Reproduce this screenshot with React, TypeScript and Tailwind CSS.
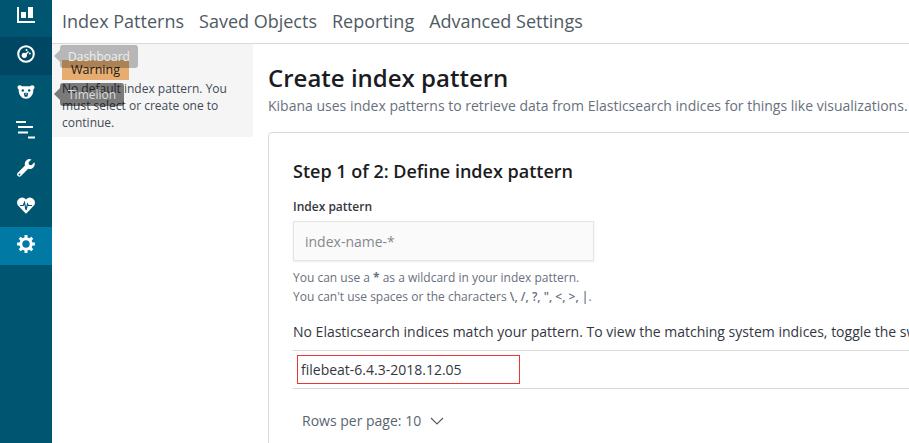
import React from "react";

const font = { fontFamily: '"Open Sans", sans-serif' };

function Rail({ children, cls }: { children: React.ReactNode; cls: string }) {
  return <div className={`flex items-center justify-center ${cls}`}>{children}</div>;
}

function gearPath() {
  const cx = 9, cy = 9, R = 9, r = 6.7, hole = 3.7, n = 8;
  const pts: string[] = [];
  for (let i = 0; i < n; i++) {
    const a = (i / n) * Math.PI * 2 - Math.PI / 2;
    const step = (Math.PI * 2) / n;
    const at = (rad: number, ang: number) =>
      `${(cx + rad * Math.cos(ang)).toFixed(2)} ${(cy + rad * Math.sin(ang)).toFixed(2)}`;
    pts.push(at(r, a - step * 0.3), at(R, a - step * 0.2), at(R, a + step * 0.2), at(r, a + step * 0.3));
  }
  return `M${pts.join("L")}Z M${cx} ${cy - hole}a${hole} ${hole} 0 1 0 0 ${hole * 2}a${hole} ${hole} 0 1 0 0 ${-hole * 2}Z`;
}

export default function App() {
  return (
    <div className="relative flex w-[909px] h-[443px] overflow-hidden bg-white" style={font}>
      <aside className="w-[52px] shrink-0 bg-[#005571] text-white flex flex-col">
        <Rail cls="h-[37px] pb-[7px]">
          <svg width="18" height="16" viewBox="0 0 18 16" fill="#fff">
            <path d="M0 0h2v14h16v2H0z" />
            <rect x="4" y="5" width="5" height="6" />
            <rect x="11" y="0" width="5" height="11" />
          </svg>
        </Rail>
        <Rail cls="h-[38px] pb-[5px] bg-[#004763]">
          <svg width="18" height="18" viewBox="0 0 18 18">
            <circle cx="9" cy="9" r="7.800" fill="none" stroke="#fff" strokeWidth="2" />
            <circle cx="7.300" cy="10.300" r="2.600" fill="#fff" />
            <path d="M8 10 11.500 6.500" stroke="#fff" strokeWidth="1.400" />
            <circle cx="12.800" cy="8.500" r="1" fill="#fff" />
            <circle cx="9.500" cy="5" r="1" fill="#fff" />
          </svg>
        </Rail>
        <Rail cls="h-[38px] pb-[5px]">
          <svg width="18" height="14" viewBox="0 0 18 14" fill="#fff">
            <path d="M.5 2.200C.5 1 1.500.2 2.800.2c.9 0 1.600.4 2 1h8.400c.4-.6 1.100-1 2-1 1.300 0 2.300.8 2.300 2 0 .9-.5 1.600-1.200 2 .2 3-.6 5.600-2.300 7.300C12.800 12.800 11 13.800 9 13.800s-3.800-1-5-2.300C2.300 9.800 1.500 7.200 1.700 4.200 1 3.800.5 3.100.5 2.200z" />
            <circle cx="5.800" cy="5.500" r="1.200" fill="#005571" />
            <circle cx="12.200" cy="5.500" r="1.200" fill="#005571" />
            <path d="M6.800 8.200c1.400-.5 3-.5 4.400 0L10.500 11.500c-.8.4-2.200.4-3 0z" fill="#005571" />
            <path d="M8 8.600h2L9 10z" fill="#fff" />
          </svg>
        </Rail>
        <Rail cls="h-[38px] pb-[5px]">
          <svg width="18" height="18" viewBox="0 0 18 18" fill="#fff" className="overflow-visible">
            <rect x="-1" y="0" width="10" height="2" />
            <rect x="1" y="5" width="15" height="2" />
            <rect x="1" y="10.500" width="10" height="2" />
            <rect x="11" y="15.500" width="7" height="2" />
          </svg>
        </Rail>
        <Rail cls="h-[38px] pb-[5px]">
          <svg width="18" height="18" viewBox="0 0 18 18" fill="#fff">
            <path d="M17.400 3.300 14.500 6.200 12 5.700 11.600 3.200 14.500.4A5 5 0 0 0 8 6.600L.8 13.800a2.200 2.200 0 0 0 3.200 3.200l7.200-7.200a5 5 0 0 0 6.200-6.500z" />
            <circle cx="2.500" cy="15.500" r="0.900" fill="#005571" />
          </svg>
        </Rail>
        <Rail cls="h-[38px] pb-[5px]">
          <svg width="18" height="17" viewBox="0 0 18 17">
            <path d="M9 16.800 6 13.800 1.800 9.300A4.700 4.700 0 0 1 1 2.800 4.900 4.900 0 0 1 9 2.400 4.900 4.900 0 0 1 17 2.800a4.700 4.700 0 0 1-.8 6.500L12 13.800z" fill="#fff" />
            <path d="M3 8.500h3.200l1.300-3 1.500 7.500 1.500-6 1 1.500h3.500" fill="none" stroke="#005571" strokeWidth="1.200" />
          </svg>
        </Rail>
        <Rail cls="h-[38px] pb-[5px] bg-[#0079a5]">
          <svg width="18" height="18" viewBox="0 0 18 18" fill="#fff">
            <path fillRule="evenodd" d={gearPath()} />
          </svg>
        </Rail>
      </aside>

      <div className="flex-1 min-w-0 flex flex-col">
        <nav className="h-[44px] shrink-0 border-b border-[#d9d9d9] flex items-center gap-[15px] pl-[10px] text-[18px] text-[#4f5a63] whitespace-nowrap">
          <span>Index Patterns</span>
          <span>Saved Objects</span>
          <span>Reporting</span>
          <span>Advanced Settings</span>
        </nav>
        <div className="flex flex-1 min-h-0">
          <section className="w-[201px] h-[93px] shrink-0 bg-[#f5f5f5] pl-[10px] pt-[16px]">
            <div className="w-[67px] h-[20px] bg-[#e6ac70] text-[12.500px] leading-[20px] text-[#1a1a1a] text-center">Warning</div>
            <p className="mt-[0px] text-[12px] leading-[17px] text-[#3f4a55] w-[180px]">
              No default index pattern. You must select or create one to continue.
            </p>
          </section>
          <main className="flex-1 min-w-0 pl-[15px] pt-[16px] whitespace-nowrap">
            <h1 className="mb-[1px] text-[24px] leading-[35px] font-semibold text-[#1a1c21]">Create index pattern</h1>
            <p className="text-[14px] leading-[20px] text-[#69707d]">
              Kibana uses index patterns to retrieve data from Elasticsearch indices for things like visualizations.
            </p>
            <div className="mt-[16px] w-[700px] h-[400px] border border-[#d9d9d9] rounded-[4px] pl-[16px] pr-0 pt-[26px] overflow-hidden">
              <h2 className="pl-[8px] text-[18px] leading-[24px] font-semibold text-[#1a1c21]">Step 1 of 2: Define index pattern</h2>
              <label className="block pl-[8px] mt-[16px] text-[12px] leading-[16px] font-semibold text-[#343741]">Index pattern</label>
              <div className="ml-[8px] mt-[6px] w-[301px] h-[40px] bg-[#fafafa] border border-[#e4e4e4] shadow-[0_1px_2px_rgba(0,0,0,0.08)] pl-[11px] flex items-center text-[14px] text-[#85888f]">
                index-name-*
              </div>
              <p className="pl-[8px] mt-[7px] text-[12px] leading-[19px] text-[#69707d]">
                You can use a <b className="font-bold">*</b> as a wildcard in your index pattern.
                <br />
                You can't use spaces or the characters <b className="font-semibold">\, /, ?, ", &lt;, &gt;, |</b>.
              </p>
              <p className="pl-[8px] mt-[16px] text-[14px] leading-[20px] text-[#343741]">
                No Elasticsearch indices match your pattern. To view the matching system indices, toggle the switch above.
              </p>
              <div className="mt-[8px] ml-[8px] w-[700px] h-[39px] border-y border-[#d9d9d9] flex items-center pl-[4px]">
                <div className="w-[223px] h-[29px] border border-[#e33] flex items-center pl-[3px] text-[14px] text-[#343741]">filebeat-6.4.3-2018.12.05</div>
              </div>
              <div className="ml-[17px] mt-[22px] flex items-center gap-[9px] text-[14px] leading-[20px] text-[#5a6570]">
                Rows per page: 10
                <svg width="14" height="8" viewBox="0 0 14 8" fill="none" stroke="#4f5a63" strokeWidth="1.100"><path d="M1 1l6 6 6-6" /></svg>
              </div>
            </div>
          </main>
        </div>
      </div>

      <div className="absolute left-[60px] top-[45px] h-[23px] w-[78px] rounded-[3px] bg-black/25 text-[#eee] text-[12px] leading-[23px] pl-[8px]">
        <span className="absolute -left-[6px] top-[5px] w-0 h-0 border-y-[6px] border-y-transparent border-r-[6px] border-r-black/25" />
        Dashboard
      </div>
      <div className="absolute left-[60px] top-[83px] h-[23px] w-[64px] rounded-[3px] bg-black/50 text-[#ddd] text-[12px] leading-[23px] pl-[8px]">
        <span className="absolute -left-[6px] top-[5px] w-0 h-0 border-y-[6px] border-y-transparent border-r-[6px] border-r-black/50" />
        Timelion
      </div>
    </div>
  );
}
